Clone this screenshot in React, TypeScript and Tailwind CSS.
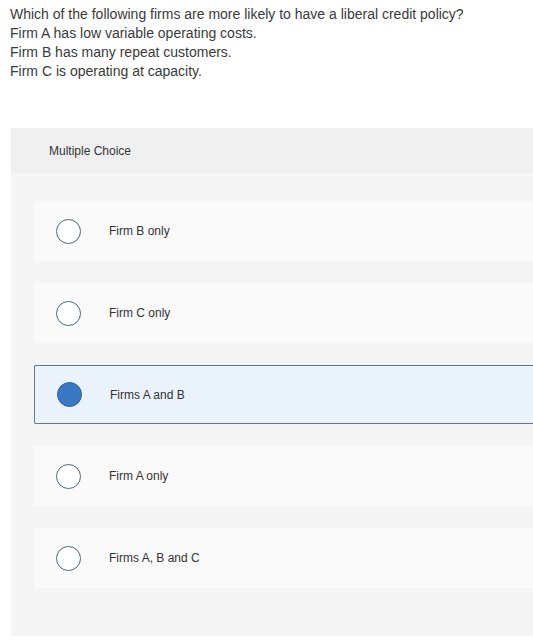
const options = [
  { label: "Firm B only", selected: false },
  { label: "Firm C only", selected: false },
  { label: "Firms A and B", selected: true },
  { label: "Firm A only", selected: false },
  { label: "Firms A, B and C", selected: false },
];

export default function App() {
  return (
    <div className="min-h-screen bg-white font-['Liberation_Sans',Arial,sans-serif] text-[#333]">
      <div className="pl-[10px] pt-[5px] text-[14px] leading-[19px] text-[#3a3a3a]">
        <p>Which of the following firms are more likely to have a liberal credit policy?</p>
        <p>Firm A has low variable operating costs.</p>
        <p>Firm B has many repeat customers.</p>
        <p>Firm C is operating at capacity.</p>
      </div>

      <div className="ml-[11px] mt-[47px] bg-[#f5f5f5] pb-[48px]">
        <div className="flex h-[45px] items-center bg-[#f0f0f0] pl-[38px] text-[12px] text-[#333]">
          Multiple Choice
        </div>
        <div className="flex flex-col gap-[22px] pl-[23px] pt-[28px]">
          {options.map((o) => (
            <div
              key={o.label}
              className={
                o.selected
                  ? "flex h-[59px] items-center rounded-l-[2px] border border-r-0 border-[#5b7a94] bg-[#eaf2fb]"
                  : "flex h-[60px] items-center bg-[#fafafa]"
              }
            >
              <span
                className={
                  o.selected
                    ? "ml-[22px] h-[25px] w-[25px] shrink-0 rounded-full border border-[#2e5f98] bg-[#3a78c3]"
                    : "ml-[22px] h-[25px] w-[25px] shrink-0 rounded-full border border-[#4d6676] bg-white"
                }
              />
              <span className="ml-[28px] text-[12px] text-[#333]">{o.label}</span>
            </div>
          ))}
        </div>
      </div>
    </div>
  );
}
